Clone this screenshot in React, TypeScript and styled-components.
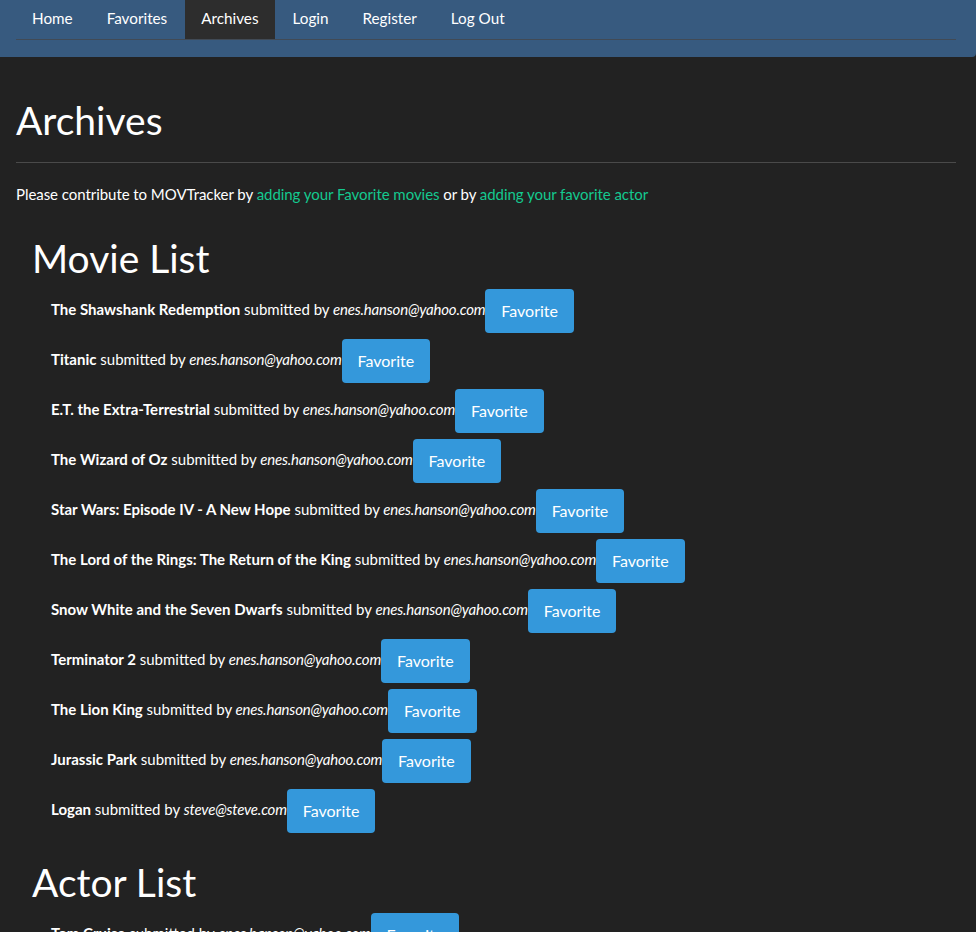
import type { FC } from 'react'
import styled, { createGlobalStyle } from 'styled-components'

const GlobalStyle = createGlobalStyle`
  html, body {
    margin: 0;
    padding: 0;
    background: #222222;
    color: #ffffff;
    font-family: Lato, "Open Sans", "Liberation Sans", sans-serif;
    font-size: 15px;
    line-height: 1.428571;
  }
  * { box-sizing: border-box; }
`

const navItems = ['Home', 'Favorites', 'Archives', 'Login', 'Register', 'Log Out']

const movies: Submission[] = [
  { title: 'The Shawshank Redemption', by: 'enes.hanson@yahoo.com' },
  { title: 'Titanic', by: 'enes.hanson@yahoo.com' },
  { title: 'E.T. the Extra-Terrestrial ', by: 'enes.hanson@yahoo.com' },
  { title: 'The Wizard of Oz', by: 'enes.hanson@yahoo.com' },
  { title: 'Star Wars: Episode IV - A New Hope', by: 'enes.hanson@yahoo.com' },
  { title: 'The Lord of the Rings: The Return of the King', by: 'enes.hanson@yahoo.com' },
  { title: 'Snow White and the Seven Dwarfs', by: 'enes.hanson@yahoo.com' },
  { title: 'Terminator 2', by: 'enes.hanson@yahoo.com' },
  { title: 'The Lion King', by: 'enes.hanson@yahoo.com' },
  { title: 'Jurassic Park', by: 'enes.hanson@yahoo.com' },
  { title: 'Logan', by: 'steve@steve.com' },
]

const actors: Submission[] = [
  { title: 'Tom Cruise', by: 'enes.hanson@yahoo.com' },
]

const App: FC = () => {
  return (
    <>
      <GlobalStyle />
      <Navbar>
        <NavList>
          {navItems.map((item) => (
            <NavLink key={item} href="#" $active={item === 'Archives'}>{item}</NavLink>
          ))}
        </NavList>
      </Navbar>
      <Container>
        <PageHeader>
          <Title>Archives</Title>
        </PageHeader>
        <Intro>
          Please contribute to MOVTracker by <Link href="#">adding your Favorite movies</Link> or by{' '}
          <Link href="#">adding your favorite actor</Link>
        </Intro>
        <SubmissionList heading="Movie List" items={movies} />
        <SubmissionList heading="Actor List" items={actors} />
      </Container>
    </>
  )
}

const SubmissionList: FC<{ heading: string; items: Submission[] }> = ({ heading, items }) => (
  <Section>
    <Title>{heading}</Title>
    <Rows>
      {items.map((item) => (
        <Row key={item.title}>
          <strong>{item.title}</strong> submitted by <em>{item.by}</em>
          <FavoriteButton type="button">Favorite</FavoriteButton>
        </Row>
      ))}
    </Rows>
  </Section>
)

interface Submission {
  title: string
  by: string
}

const Navbar = styled.nav`
  background: #375a7f;
  height: 57px;
  padding: 0 20px 0 16px;
  border-bottom-right-radius: 4px;
`

const NavList = styled.div`
  display: flex;
  height: 40px;
  border-bottom: 1px solid #414a55;
`

const NavLink = styled.a<{ $active?: boolean }>`
  display: flex;
  align-items: center;
  height: 39px;
  padding: 0 16px 2px;
  margin-right: 2px;
  color: #ffffff;
  font-size: 15.25px;
  text-decoration: none;
  background: ${(p) => (p.$active ? '#2d2d2d' : 'transparent')};
`

const Container = styled.main`
  padding: 0 20px 40px 16px;
`

const PageHeader = styled.div`
  padding: 42px 0 20px;
  border-bottom: 1px solid #4a4a4a;
`

const Title = styled.h1`
  margin: 0;
  font-size: 39px;
  font-weight: 400;
  line-height: 1.1;
`

const Intro = styled.p`
  margin: 21.5px 0 31.5px;
  letter-spacing: -0.05px;
`

const Link = styled.a`
  color: #14c98f;
  text-decoration: none;
`

const Section = styled.section`
  margin-top: 27.5px;
  padding-left: 16px;

  h1 {
    margin-bottom: 9px;
  }
`

const Rows = styled.div`
  padding-left: 19px;
`

const Row = styled.div`
  margin-bottom: 6px;

  strong {
    font-weight: 700;
  }

  em {
    letter-spacing: -0.2px;
  }
`

const FavoriteButton = styled.button`
  display: inline-block;
  vertical-align: middle;
  padding: 10px 15px;
  border: 1px solid transparent;
  border-radius: 4px;
  background: #3498db;
  color: #ffffff;
  font-family: inherit;
  font-size: 16px;
  line-height: 22px;
  cursor: pointer;
`

export default App
